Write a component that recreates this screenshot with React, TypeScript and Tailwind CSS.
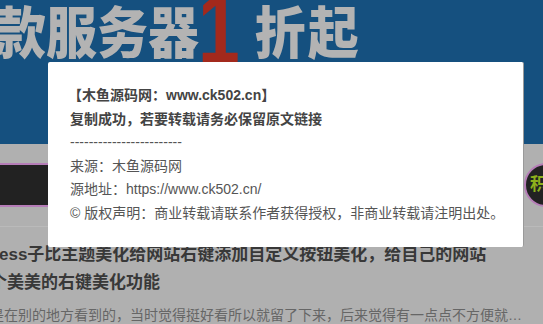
export default function App() {
  const font = { fontFamily: '"Liberation Sans", "Noto Sans CJK SC", sans-serif' };
  return (
    <div
      className="relative w-[543px] h-[324px] overflow-hidden bg-[#b0b0b0]"
      style={font}
    >
      {/* banner */}
      <div className="h-[144px] bg-[#15507f] overflow-hidden">
        <div className="flex items-start whitespace-nowrap ml-[-5px]">
          <span className="mt-[6px] text-[51px] leading-[51px] font-black text-[#b3b3b3] scale-y-110 origin-top">
            款服务器
          </span>
          <span className="ml-[-8px] mt-[-22px] text-[100px] leading-[100px] font-black text-[#a3291c] scale-x-75">
            1
          </span>
          <span className="ml-[8px] mt-[6px] text-[51px] leading-[51px] font-black text-[#b3b3b3] tracking-[2px] scale-y-110 origin-top">
            折起
          </span>
        </div>
      </div>

      {/* search row */}
      <div className="mt-[19px] flex h-[44px]">
        <div className="shrink-0 w-[520px] bg-[#222] border-y-2 border-[#b67db8] rounded-r-full" />
        <div className="shrink-0 ml-[4px] flex items-center pl-[4px] pr-[20px] bg-[#222] border-2 border-[#b67db8] rounded-full text-[#8db01c] text-[17px] font-bold whitespace-nowrap">
          积分
        </div>
      </div>
      <div className="mt-[19px] h-px bg-[#bababa]" />

      {/* article */}
      <div className="pt-[14px] whitespace-nowrap">
        <div className="ml-[-1px] text-[17px] leading-[28px] font-bold text-[#383838]">
          ess子比主题美化给网站右键添加自定义按钮美化，给自己的网站
        </div>
        <div className="ml-[-10px] text-[17px] leading-[28px] font-bold text-[#383838]">
          个美美的右键美化功能
        </div>
        <div className="mt-[8px] ml-[-10px] text-[14px] leading-[20px] text-[#666]">
          是在别的地方看到的，当时觉得挺好看所以就留了下来，后来觉得有一点点不方便就…
        </div>
      </div>

      {/* copy notice */}
      <div className="absolute left-[48px] top-[62px] w-[476px] h-[185px] bg-white rounded-[2px] border-r border-[#9a9a9a] px-[22px] pt-[22px] text-[14px] leading-[23.6px] text-[#555] whitespace-nowrap">
        <p className="font-bold text-[#444] ml-[-2px]">【木鱼源码网：www.ck502.cn】</p>
        <p className="font-bold text-[#444]">复制成功，若要转载请务必保留原文链接</p>
        <p>------------------------</p>
        <p>来源：木鱼源码网</p>
        <p>源地址：https://www.ck502.cn/</p>
        <p>© 版权声明：商业转载请联系作者获得授权，非商业转载请注明出处。</p>
      </div>
    </div>
  );
}
